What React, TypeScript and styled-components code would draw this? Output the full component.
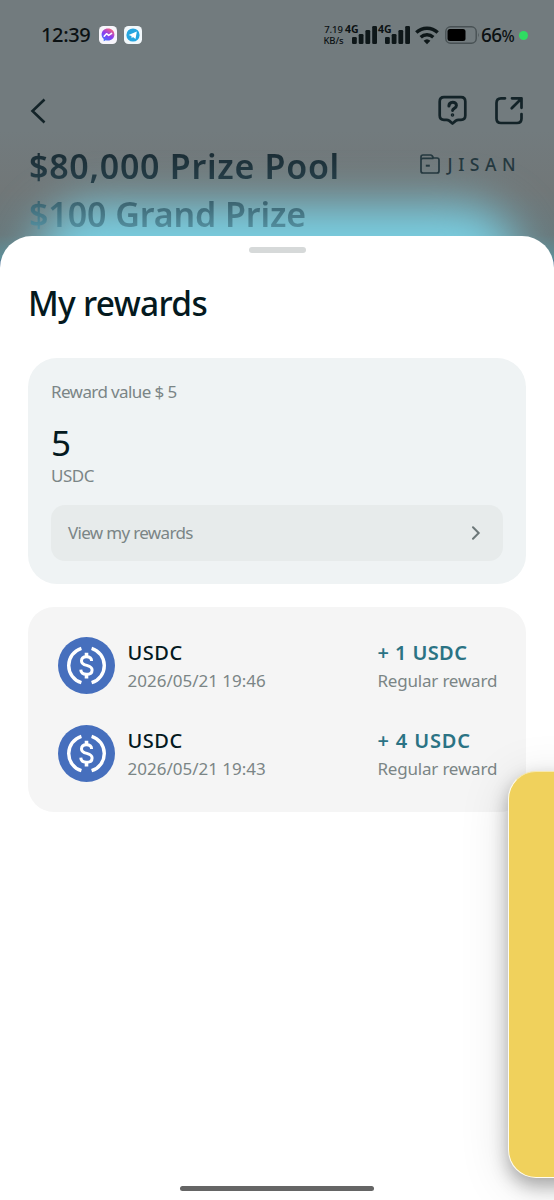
import React from "react";
import styled, { createGlobalStyle } from "styled-components";

const Global = createGlobalStyle`
  * { box-sizing: border-box; }
  body { margin: 0; background: #fff; }
`;

const Screen = styled.main`
  position: relative;
  isolation: isolate;
  display: flex;
  flex-direction: column;
  width: 554px;
  height: 1200px;
  overflow: hidden;
  font-family: "Noto Sans", "Liberation Sans", sans-serif;
  color: #04191e;
  background: linear-gradient(180deg, #727b7e 0, #727b7e 130px, #717778 190px, #69787b 235px, #5d8d95 258px, #44688f 263px, #44688f 100%);
`;

const Glow = styled.div`
  position: absolute;
  z-index: -1;
  left: 34px;
  top: 205px;
  width: 486px;
  height: 140px;
  border-radius: 60px;
  background: #7acfe2;
  filter: blur(23px);
`;

const StatusBar = styled.header`
  display: flex;
  align-items: center;
  height: 70px;
  padding: 0 26px 0 41px;
  color: #0b1113;
`;

const Clock = styled.span`
  width: 58px;
  font-size: 20px;
  line-height: 24px;
  font-weight: 500;
  letter-spacing: -0.35px;
`;

const Apps = styled.div`
  display: flex;
  gap: 7px;
`;

const StatusRight = styled.div`
  display: flex;
  align-items: center;
  margin-left: auto;
`;

const Speed = styled.div`
  width: 23px;
  font-size: 9.5px;
  line-height: 11.5px;
  font-weight: 500;
  text-align: center;
  white-space: nowrap;
  letter-spacing: -0.1px;
`;

const Signal = styled.div`
  display: flex;
  align-items: flex-start;
  width: 33px;
  height: 20px;
`;

const Network = styled.span`
  width: 14px;
  margin-right: -7px;
  font-size: 10.5px;
  line-height: 8px;
  font-weight: 700;
`;

const Percent = styled.span`
  width: 38px;
  margin-left: 1px;
  font-size: 19px;
  line-height: 24px;
  font-weight: 500;
  letter-spacing: -0.6px;
  white-space: nowrap;
  small { font-size: 15.5px; }
`;

const Dot = styled.i`
  width: 9px;
  height: 9px;
  border-radius: 50%;
  background: #2fdc62;
`;

const NavBar = styled.nav`
  display: flex;
  align-items: center;
  height: 72px;
  padding: 9px 30px 0 30px;
`;

const NavActions = styled.div`
  display: flex;
  gap: 27px;
  margin-left: auto;
`;

const Hero = styled.section`
  display: flex;
  justify-content: space-between;
  height: 93.5px;
  padding: 0 38.5px 0 29px;
`;

const HeroTitle = styled.h1`
  margin: 0;
  font-size: 34px;
  line-height: 48px;
  font-weight: 600;
  white-space: nowrap;
`;

const HeroLine = styled.span<{ $from: string; $to: string; $spacing: number }>`
  display: block;
  width: max-content;
  letter-spacing: ${(p) => p.$spacing}px;
  background: linear-gradient(180deg, ${(p) => p.$from} 20%, ${(p) => p.$to} 85%);
  background-clip: text;
  -webkit-background-clip: text;
  color: transparent;
`;

const Owner = styled.div`
  display: flex;
  align-items: center;
  gap: 8px;
  height: 44px;
  color: #24383f;
  font-size: 17.5px;
  font-weight: 500;
  letter-spacing: 5.5px;
  margin-right: -5.5px;
`;

const Sheet = styled.section`
  flex: 1;
  display: flex;
  flex-direction: column;
  align-items: center;
  padding: 11px 28px 9px;
  border-radius: 32px 32px 0 0;
  background: #fff;
`;

const Grabber = styled.div`
  width: 57px;
  height: 6px;
  border-radius: 3px;
  background: #d6d9d9;
`;

const SheetTitle = styled.h2`
  align-self: flex-start;
  margin: 26px 0 31px;
  font-size: 33.5px;
  line-height: 48px;
  font-weight: 500;
  letter-spacing: -0.7px;
`;

const ValueCard = styled.div`
  width: 100%;
  height: 226px;
  padding: 22px 23px 0;
  border-radius: 29px;
  background: #eff3f4;
`;

const Muted = styled.div<{ $spacing?: number }>`
  font-size: 17px;
  line-height: 24px;
  color: #7b8586;
  white-space: nowrap;
  letter-spacing: ${(p) => p.$spacing ?? 0}px;
`;

const Amount = styled.div`
  margin-top: 16px;
  font-size: 35px;
  line-height: 46px;
`;

const Unit = styled(Muted)`
  margin-top: -2px;
`;

const ViewButton = styled.button`
  display: flex;
  align-items: center;
  justify-content: space-between;
  width: 100%;
  height: 56px;
  margin-top: 17px;
  padding: 0 22px 0 17px;
  border: 0;
  border-radius: 14px;
  background: #e7ebeb;
  font-family: inherit;
`;

const RewardList = styled.ul`
  display: flex;
  flex-direction: column;
  gap: 31px;
  width: 100%;
  height: 205px;
  margin: 23px 0 0;
  padding: 30px 28px 0 30px;
  list-style: none;
  border-radius: 26px;
  background: #f5f5f5;
`;

const RewardRow = styled.li`
  display: flex;
  align-items: center;
  height: 57px;
`;

const RewardInfo = styled.div`
  margin-left: 12.5px;
`;

const RewardAmount = styled.div`
  width: 120.5px;
  margin-left: auto;
`;

const Strong = styled.div<{ $accent?: boolean; $spacing: number }>`
  margin-bottom: 2px;
  font-size: 20px;
  line-height: 29px;
  font-weight: ${(p) => (p.$accent ? 600 : 500)};
  color: ${(p) => (p.$accent ? "#2b7384" : "#04191e")};
  letter-spacing: ${(p) => p.$spacing}px;
  white-space: nowrap;
`;

const HomeBar = styled.div`
  width: 194px;
  height: 5px;
  margin-top: auto;
  border-radius: 3px;
  background: #656565;
`;

const SidePanel = styled.aside`
  position: absolute;
  left: 508px;
  top: 771px;
  width: 80px;
  height: 407px;
  border: 1.5px solid #fffdf2;
  border-top-color: #f7e9b0;
  border-radius: 28px;
  background: #f0d15c;
  box-shadow: 0 8px 18px rgba(0, 0, 0, 0.3), 0 8px 50px rgba(0, 0, 0, 0.13);
`;

const MessengerIcon = () => (
  <svg width="18" height="18" viewBox="0 0 18 18">
    <defs>
      <linearGradient id="msg" x1="0.2" y1="1" x2="0.8" y2="0">
        <stop offset="0" stopColor="#3977ff" />
        <stop offset="0.5" stopColor="#8d3df0" />
        <stop offset="1" stopColor="#ff6372" />
      </linearGradient>
    </defs>
    <rect width="18" height="18" rx="4.5" fill="#f7f5fb" />
    <path d="M9 2.6c-3.7 0-6.4 2.6-6.4 6 0 1.9.8 3.3 2.1 4.4v2.3l2-1.1c.7.2 1.5.4 2.3.4 3.7 0 6.4-2.6 6.4-6S12.7 2.6 9 2.6z" fill="url(#msg)" />
    <path d="M5.2 10.3l2.3-2.6 2.2 1.7 2.9-2" fill="none" stroke="#fff" strokeWidth="1.5" strokeLinecap="round" strokeLinejoin="round" />
  </svg>
);

const TelegramIcon = () => (
  <svg width="18" height="18" viewBox="0 0 18 18">
    <rect width="18" height="18" rx="4.5" fill="#f2f8fb" />
    <circle cx="9" cy="9" r="6.6" fill="#25a5df" />
    <path d="M4.6 9l8.2-3.4-1.3 7.3-2.5-1.8-1.3 1.2-.3-2.2z" fill="#fff" />
  </svg>
);

const SignalBars = () => (
  <svg width="25" height="19" viewBox="0 0 25 19" fill="#0e1719">
    <rect x="0" y="12" width="4.8" height="7" rx="1.3" />
    <rect x="6.7" y="9" width="4.8" height="10" rx="1.3" />
    <rect x="13.4" y="5" width="4.8" height="14" rx="1.3" />
    <rect x="20.2" y="1" width="4.8" height="18" rx="1.3" />
  </svg>
);

const Wifi = styled.svg`
  margin: 0 6px 0 4px;
`;

const WifiIcon = () => (
  <Wifi width="24" height="19" viewBox="0 0 24 19">
    <g fill="none" stroke="#0e1719" strokeWidth="3.4">
      <path d="M1.3 6.5a15.6 15.6 0 0 1 21.4 0" />
      <path d="M5.7 11.3a9.2 9.2 0 0 1 12.6 0" />
    </g>
    <path d="M8.6 14.8a5 5 0 0 1 6.8 0L12 18.3z" fill="#0e1719" />
  </Wifi>
);

const BatteryIcon = () => (
  <svg width="35" height="18" viewBox="0 0 35 18">
    <rect x="0.8" y="0.8" width="30.4" height="16.4" rx="4.8" fill="none" stroke="#485154" strokeWidth="1.4" />
    <rect x="2.5" y="3" width="18" height="12" rx="2.5" fill="#000" />
    <path d="M33 6.5q1.5 2.5 0 5z" fill="#485154" />
  </svg>
);

const BackIcon = () => (
  <svg width="16" height="26" viewBox="0 0 16 26">
    <path d="M14.5 1.5L2.5 13l12 11.5" fill="none" stroke="#132328" strokeWidth="2.6" />
  </svg>
);

const HelpIcon = () => (
  <svg width="30" height="31" viewBox="0 0 30 31" fill="none" stroke="#132328" strokeWidth="2.7" strokeLinecap="round" strokeLinejoin="round">
    <path d="M6 2.2h17q4.3 0 4.3 4.3v14q0 4.3-4.3 4.3h-2.500q-1.500 0-2.600.8L14.500 28.500l-3.400-2.900q-1.100-.8-2.600-.8H6q-4.300 0-4.300-4.300v-14Q1.700 2.200 6 2.200z" />
    <path d="M10.900 11.100c.1-5.200 7.500-5 7.500-.7 0 2.700-3.600 2.700-3.800 5" strokeWidth="3" />
    <circle cx="14.500" cy="20" r="0.700" strokeWidth="2.200" />
  </svg>
);

const ShareIcon = () => (
  <svg width="29" height="31" viewBox="0 0 29 31" fill="none" stroke="#132328" strokeWidth="2.7" strokeLinecap="round" strokeLinejoin="round">
    <path d="M10 3.300H6Q1.500 3.300 1.500 8v15.500Q1.500 28 6 28h16q4.500 0 4.500-4.500v-4.500" />
    <path d="M17 3.300h9.500v9.500M26 4L16.700 13.300" />
  </svg>
);

const FolderIcon = () => (
  <svg width="20" height="20" viewBox="0 0 20 20" fill="none" stroke="#24383f" strokeWidth="1.7" strokeLinejoin="round">
    <path d="M1 17V3q0-2 2-2h7.500q1 0 1.600.7L13.500 4H17q2 0 2 2v11q0 2-2 2H3q-2 0-2-2zM1 6.200Q1 4.300 3 4.300h10.500" />
    <path d="M5.800 11.700h4" strokeWidth="2" />
  </svg>
);

const ChevronIcon = () => (
  <svg width="10" height="14" viewBox="0 0 10 14">
    <path d="M2 1.200L7.700 7 2 12.800" fill="none" stroke="#6c7778" strokeWidth="2" strokeLinecap="round" />
  </svg>
);

const UsdcIcon = () => (
  <svg width="57" height="57" viewBox="0 0 57 57">
    <circle cx="28.5" cy="28.5" r="28.5" fill="#466fbd" />
    <g fill="none" stroke="#fff" strokeWidth="3.4">
      <path d="M23.400 11.300a18 18 0 0 0 0 34.400M33.600 11.300a18 18 0 0 1 0 34.400" />
      <path d="M33.600 24c0-2.900-2.200-4.300-5.200-4.300s-4.900 1.600-4.900 4.200c0 6 10.600 3 10.600 9 0 2.800-2.300 4.400-5.600 4.400s-5.600-1.700-5.700-4.700" strokeWidth="3" />
      <path d="M28.500 15.700v4M28.500 37.300v4.200" strokeWidth="3.600" />
    </g>
  </svg>
);

const rewards = [
  { amount: "+ 1 USDC", time: "2026/05/21 19:46", spacing: 0.4 },
  { amount: "+ 4 USDC", time: "2026/05/21 19:43", spacing: 0.85 },
];

export default function App() {
  return (
    <>
      <Global />
      <Screen>
        <Glow />
        <StatusBar>
          <Clock>12:39</Clock>
          <Apps>
            <MessengerIcon />
            <TelegramIcon />
          </Apps>
          <StatusRight>
            <Speed>7.19<br />KB/s</Speed>
            <Signal><Network>4G</Network><SignalBars /></Signal>
            <Signal><Network>4G</Network><SignalBars /></Signal>
            <WifiIcon />
            <BatteryIcon />
            <Percent>66<small>%</small></Percent>
            <Dot />
          </StatusRight>
        </StatusBar>
        <NavBar>
          <BackIcon />
          <NavActions>
            <HelpIcon />
            <ShareIcon />
          </NavActions>
        </NavBar>
        <Hero>
          <HeroTitle>
            <HeroLine $from="#1a2c34" $to="#263f49" $spacing={0.72}>$80,000 Prize Pool</HeroLine>
            <HeroLine $from="#3a606c" $to="#5593a4" $spacing={-0.1}>$100 Grand Prize</HeroLine>
          </HeroTitle>
          <Owner><FolderIcon />JISAN</Owner>
        </Hero>
        <Sheet>
          <Grabber />
          <SheetTitle>My rewards</SheetTitle>
          <ValueCard>
            <Muted $spacing={-0.6}>Reward value $ 5</Muted>
            <Amount>5</Amount>
            <Unit $spacing={-0.5}>USDC</Unit>
            <ViewButton>
              <Muted as="span" $spacing={-0.67}>View my rewards</Muted>
              <ChevronIcon />
            </ViewButton>
          </ValueCard>
          <RewardList>
            {rewards.map((r) => (
              <RewardRow key={r.time}>
                <UsdcIcon />
                <RewardInfo>
                  <Strong $spacing={0.5}>USDC</Strong>
                  <Muted $spacing={0}>{r.time}</Muted>
                </RewardInfo>
                <RewardAmount>
                  <Strong $accent $spacing={r.spacing}>{r.amount}</Strong>
                  <Muted $spacing={-0.2}>Regular reward</Muted>
                </RewardAmount>
              </RewardRow>
            ))}
          </RewardList>
          <HomeBar />
        </Sheet>
        <SidePanel />
      </Screen>
    </>
  );
}
